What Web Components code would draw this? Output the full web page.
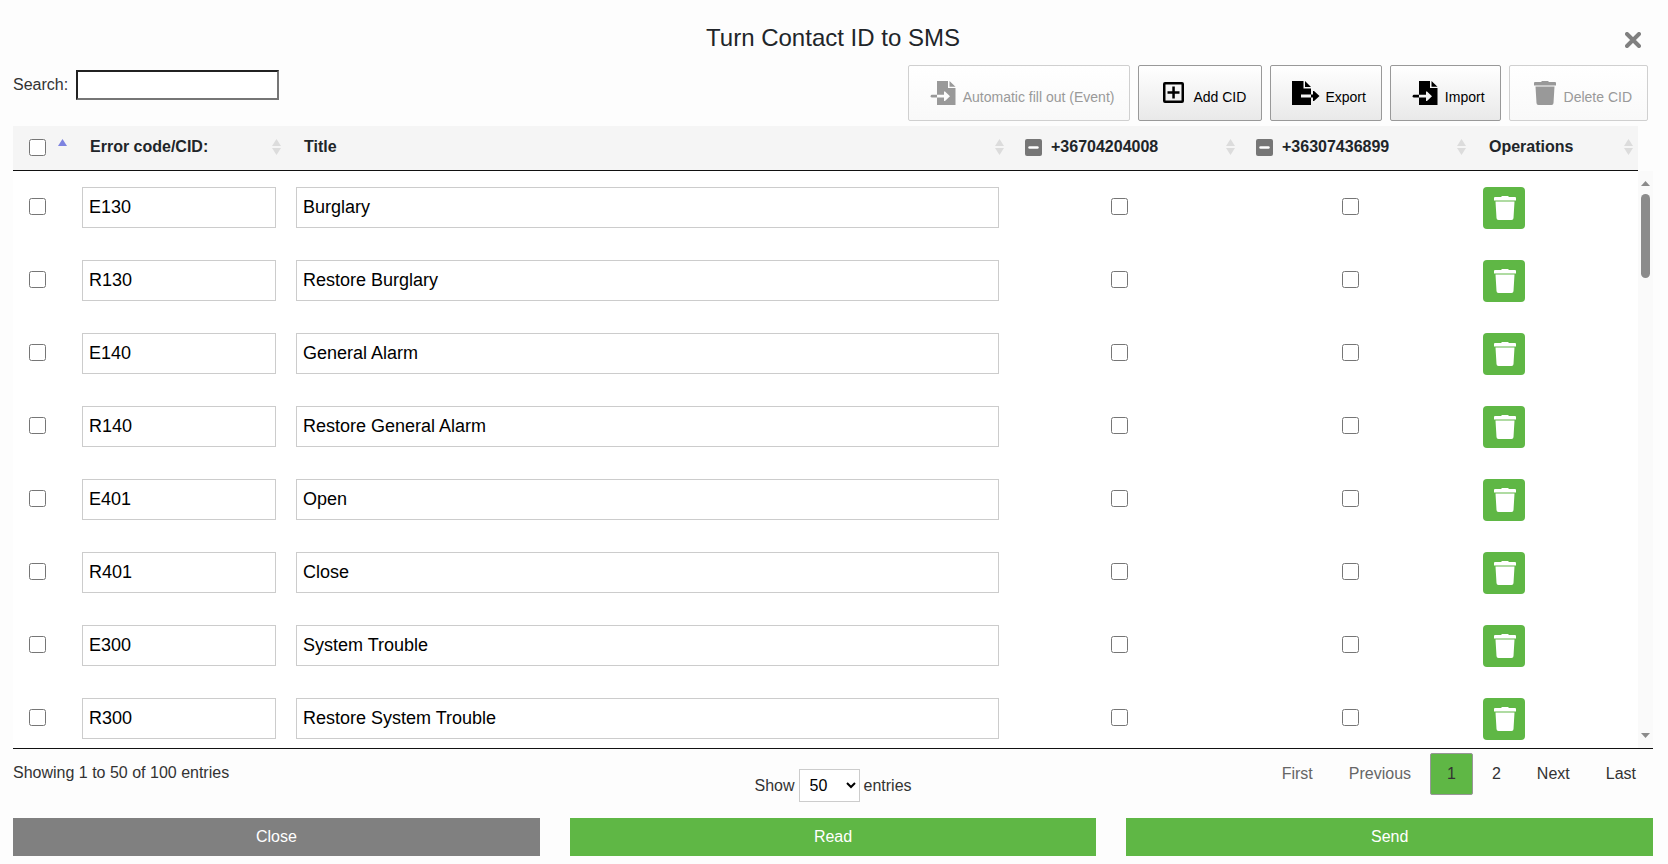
<!DOCTYPE html>
<html lang="en">
<head>
<meta charset="utf-8">
<title>Turn Contact ID to SMS</title>
<style>
	body {
		margin: 0;
		background: #fdfdfd;
		color: #212529;
		font: 16px/24px "Liberation Sans", Arial, sans-serif;
	}
</style>
</head>
<body>
<cid-dialog></cid-dialog>

<script>
const icons = {
	import: `<path d="M13 4h11v7h7.500v17H13v-7.500h7V24h1l5-4.800-5-4.800h-1v3.400h-7z"/><path d="M25.500 4l6 5.800h-6z"/><path d="M8 17.800h5v2.700H8a1.300 1.300 0 0 1 0-2.700z"/>`,
	export: `<path d="M6 4h11.500v7.500H25v6H15v3h10V28H6z"/><path d="M19 4l6 6h-6z"/><path d="M25 17.500h2V14h1l5.500 5-5.500 5h-1v-3.500h-2z"/>`,
	add: `<path fill-rule="evenodd" d="M11 5h17a2 2 0 0 1 2 2v17a2 2 0 0 1-2 2H11a2 2 0 0 1-2-2V7a2 2 0 0 1 2-2zm.500 2.500v16h16v-16z"/><path d="M18.300 9.500h2.500v4.800h4.700v2.500h-4.700v4.700h-2.500v-4.700h-4.800v-2.500h4.800z"/>`,
	trash: `<path d="M10 5h6l1-1h6l1 1h6a1 1 0 0 1 1 1v2.500H9V6a1 1 0 0 1 1-1zM10.500 9.500h19L28.500 26a2 2 0 0 1-2 2h-13a2 2 0 0 1-2-2z"/>`,
}

const entries = [
	["E130", "Burglary"],
	["R130", "Restore Burglary"],
	["E140", "General Alarm"],
	["R140", "Restore General Alarm"],
	["E401", "Open"],
	["R401", "Close"],
	["E300", "System Trouble"],
	["R300", "Restore System Trouble"],
]

const phones = ["+36704204008", "+36307436899"]

class CidIcon extends HTMLElement {
	constructor() {
		super()
		this.attachShadow({ mode: "open" })
	}

	connectedCallback() {
		this.shadowRoot.innerHTML = `
<style>
	:host { display: block; width: 39px; height: 32px; }
	svg { display: block; fill: currentColor; }
</style>
<svg width="39" height="32" viewBox="0 0 39 32" aria-hidden="true">${icons[this.getAttribute("name")]}</svg>`
	}
}
customElements.define("cid-icon", CidIcon)

const toolButtonTemplate = document.createElement("template")
toolButtonTemplate.innerHTML = `
<style>
	:host { display: block; }

	button {
		display: flex;
		align-items: center;
		height: 56px;
		padding: 0 15px;
		border: 1px solid #999;
		border-radius: 2px;
		background: linear-gradient(to bottom, #fff 0%, #e9e9e9 100%);
		color: #000;
		font: 14px/20px "Liberation Sans", Arial, sans-serif;
		cursor: pointer;
	}

	button:disabled {
		border-color: #d0d0d0;
		background: linear-gradient(to bottom, #fff 0%, #f9f9f9 100%);
		color: #999;
		cursor: default;
	}

	span { padding-top: 8px; }
</style>
<button type="button"><cid-icon></cid-icon><span><slot></slot></span></button>
`

class ToolButton extends HTMLElement {
	constructor() {
		super()
		this.attachShadow({ mode: "open" })
	}

	connectedCallback() {
		const content = toolButtonTemplate.content.cloneNode(true)
		content.querySelector("cid-icon").setAttribute("name", this.getAttribute("icon"))
		content.querySelector("button").disabled = this.hasAttribute("disabled")
		this.shadowRoot.replaceChildren(content)
	}
}
customElements.define("tool-button", ToolButton)

class SortMark extends HTMLElement {
	constructor() {
		super()
		this.attachShadow({ mode: "open" }).innerHTML = `
<style>
	:host { display: block; flex: none; color: #dcdcdc; }
	:host([order="asc"]) { color: #7d83e0; }
	:host([order="asc"]) .down { display: none; }
	svg { display: block; fill: currentColor; }
</style>
<svg width="9" height="16" viewBox="0 0 9 16" aria-hidden="true"><path d="M4.500 0L9 7H0z"/><path class="down" d="M0 9h9l-4.500 7z"/></svg>`
	}
}
customElements.define("sort-mark", SortMark)

const cidTableTemplate = document.createElement("template")
cidTableTemplate.innerHTML = `
<style>
	:host {
		display: flex;
		min-height: 0;
		border-bottom: 1px solid #111;
	}

	.scroller {
		flex: 1;
		overflow-y: auto;
		scrollbar-width: none;
	}

	table {
		width: 100%;
		table-layout: fixed;
		border-spacing: 0;
		background: #fff;
	}

	.select { width: 59px; }
	.code { width: 214px; }
	.phone { width: 231px; }
	.operations { width: 167px; }

	th, td { box-sizing: border-box; }

	th {
		position: sticky;
		top: 0;
		z-index: 1;
		height: 45px;
		padding: 0 5px 2px 18px;
		border-bottom: 1px solid #111;
		background: #f5f5f5;
		text-align: left;
	}

	th.tick { padding-left: 16px; }

	.head {
		display: flex;
		align-items: center;
		justify-content: space-between;
	}

	.head label {
		display: flex;
		align-items: center;
		gap: 9px;
	}

	td {
		height: 73px;
		padding: 0 10px;
	}

	td.tick { padding: 0 6px 4px 16px; }
	td.center { padding: 0 20px 4px 10px; text-align: center; }
	td.operation { padding-left: 12px; }

	input[type="checkbox"] {
		display: inline-block;
		width: 17px;
		height: 17px;
		margin: 0;
		accent-color: #767676;
		vertical-align: middle;
	}

	input[type="text"] {
		display: block;
		box-sizing: border-box;
		width: 100%;
		height: 41px;
		padding: 0 6px;
		border: 1px solid #ccc;
		background: #fff;
		color: #000;
		font: 18px/24px "Liberation Sans", Arial, sans-serif;
	}

	td button {
		display: flex;
		align-items: center;
		justify-content: center;
		width: 42px;
		height: 42px;
		padding: 0;
		border: 0;
		border-radius: 4px;
		background: #5fb745;
		color: #fff;
		cursor: pointer;
	}

	.rail {
		display: flex;
		flex-direction: column;
		align-items: center;
		width: 15px;
		box-sizing: border-box;
		margin-top: 45px;
		padding: 10px 0;
		background: #fafafa;
	}

	.rail svg { fill: #8b8b8b; }

	.thumb {
		width: 9px;
		height: 84px;
		margin: 8px 0 auto;
		border-radius: 5px;
		background: #8b8b8b;
	}
</style>
<div class="scroller">
	<table>
		<colgroup><col class="select"><col class="code"><col><col class="phone"><col class="phone"><col class="operations"></colgroup>
		<thead>
			<tr>
				<th class="tick"><div class="head"><input type="checkbox" aria-label="Select all"><sort-mark order="asc"></sort-mark></div></th>
				<th><div class="head">Error code/CID:<sort-mark></sort-mark></div></th>
				<th><div class="head">Title<sort-mark></sort-mark></div></th>
				${phones.map(phone => `<th class="tick"><div class="head"><label><input type="checkbox" class="partial">${phone}</label><sort-mark></sort-mark></div></th>`).join("")}
				<th><div class="head">Operations<sort-mark></sort-mark></div></th>
			</tr>
		</thead>
		<tbody></tbody>
	</table>
</div>
<div class="rail">
	<svg width="9" height="5" viewBox="0 0 9 5"><path d="M4.500 0L9 5H0z"/></svg>
	<div class="thumb"></div>
	<svg width="9" height="5" viewBox="0 0 9 5"><path d="M0 0h9L4.500 5z"/></svg>
</div>
`

class CidTable extends HTMLElement {
	constructor() {
		super()
		this._shadowRoot = this.attachShadow({ mode: "open" })
		this._shadowRoot.appendChild(cidTableTemplate.content.cloneNode(true))
	}

	connectedCallback() {
		this._shadowRoot.querySelector("tbody").innerHTML = entries.map(([code, title]) => `
			<tr>
				<td class="tick"><input type="checkbox" aria-label="Select ${code}"></td>
				<td><input type="text" value="${code}" aria-label="Error code"></td>
				<td><input type="text" value="${title}" aria-label="Title"></td>
				${phones.map(phone => `<td class="center"><input type="checkbox" aria-label="${code} to ${phone}"></td>`).join("")}
				<td class="operation"><button type="button" aria-label="Delete ${code}"><cid-icon name="trash"></cid-icon></button></td>
			</tr>`).join("")

		// indeterminate has no attribute, it can only be set from script
		this._shadowRoot.querySelectorAll(".partial").forEach(box => box.indeterminate = true)
	}
}
customElements.define("cid-table", CidTable)

class PageNav extends HTMLElement {
	constructor() {
		super()
		this.attachShadow({ mode: "open" }).innerHTML = `
<style>
	:host { display: block; }
	nav { display: flex; justify-content: flex-end; gap: 2px; }

	button {
		height: 42px;
		padding: 0 16px;
		border: 1px solid transparent;
		border-radius: 2px;
		background: none;
		color: #333;
		font: inherit;
		cursor: pointer;
	}

	button:disabled { color: #666; cursor: default; }
	button[aria-current] { border-color: #979797; background: #5fb745; }
</style>
<nav aria-label="Pages">
	<button type="button" disabled>First</button>
	<button type="button" disabled>Previous</button>
	<button type="button" aria-current="page">1</button>
	<button type="button">2</button>
	<button type="button">Next</button>
	<button type="button">Last</button>
</nav>`
	}
}
customElements.define("page-nav", PageNav)

class ActionButton extends HTMLElement {
	constructor() {
		super()
		this.attachShadow({ mode: "open" }).innerHTML = `
<style>
	:host { display: block; flex: 1; --fill: #5fb745; }
	:host([variant="muted"]) { --fill: #808080; }

	button {
		width: 100%;
		height: 38px;
		padding: 0;
		border: 0;
		background: var(--fill);
		color: #fff;
		font: inherit;
		cursor: pointer;
	}
</style>
<button type="button"><slot></slot></button>`
	}
}
customElements.define("action-button", ActionButton)

const cidDialogTemplate = document.createElement("template")
cidDialogTemplate.innerHTML = `
<style>
	:host {
		display: flex;
		flex-direction: column;
		box-sizing: border-box;
		height: 100vh;
		padding: 20px 15px 8px 13px;
	}

	header {
		display: grid;
		grid-template-columns: 1fr auto 1fr;
		align-items: center;
		height: 36px;
	}

	h1 {
		grid-column: 2;
		margin: 0;
		font-size: 24px;
		font-weight: 400;
		line-height: 36px;
	}

	.dismiss {
		justify-self: end;
		margin-right: 12px;
		padding: 4px 0 0;
		border: 0;
		background: none;
		color: #808080;
		cursor: pointer;
	}

	.dismiss svg { display: block; }

	.top {
		display: flex;
		justify-content: space-between;
		padding: 9px 5px 5px 0;
	}

	.search {
		display: flex;
		align-items: center;
		gap: 8px;
		height: 40px;
		color: #333;
	}

	.search input {
		box-sizing: border-box;
		width: 203px;
		height: 30px;
		border: 2px solid;
		border-color: #212121 #767676 #767676 #212121;
		background: #fff;
		font: inherit;
	}

	.tools { display: flex; gap: 8px; }

	cid-table { flex: 1; }

	.bottom {
		display: grid;
		grid-template-columns: 1fr auto 1fr;
		align-items: start;
		height: 69px;
		color: #333;
	}

	.info { padding-top: 12px; }

	.length {
		display: flex;
		align-items: center;
		gap: 4px;
		padding-top: 20px;
	}

	select {
		box-sizing: border-box;
		width: 61px;
		height: 33px;
		padding: 0 0 0 6px;
		border: 1px solid #ccc;
		background: #fff;
		font: inherit;
	}

	page-nav { padding-top: 4px; }

	.actions { display: flex; gap: 30px; }
</style>
<header>
	<h1>Turn Contact ID to SMS</h1>
	<button class="dismiss" type="button" aria-label="Close dialog">
		<svg width="16" height="16" viewBox="0 0 16 16"><path d="M2 2l12 12M14 2L2 14" fill="none" stroke="currentColor" stroke-width="4" stroke-linecap="round"/></svg>
	</button>
</header>
<div class="top">
	<label class="search">Search: <input type="search"></label>
	<div class="tools">
		<tool-button icon="import" disabled>Automatic fill out (Event)</tool-button>
		<tool-button icon="add">Add CID</tool-button>
		<tool-button icon="export">Export</tool-button>
		<tool-button icon="import">Import</tool-button>
		<tool-button icon="trash" disabled>Delete CID</tool-button>
	</div>
</div>
<cid-table></cid-table>
<div class="bottom">
	<div class="info">Showing 1 to 50 of 100 entries</div>
	<label class="length">Show <select><option>10</option><option>25</option><option selected>50</option><option>100</option></select> entries</label>
	<page-nav></page-nav>
</div>
<div class="actions">
	<action-button variant="muted">Close</action-button>
	<action-button>Read</action-button>
	<action-button>Send</action-button>
</div>
`

class CidDialog extends HTMLElement {
	constructor() {
		super()
		this.attachShadow({ mode: "open" }).appendChild(cidDialogTemplate.content.cloneNode(true))
	}
}
customElements.define("cid-dialog", CidDialog)
</script>
</body>
</html>
